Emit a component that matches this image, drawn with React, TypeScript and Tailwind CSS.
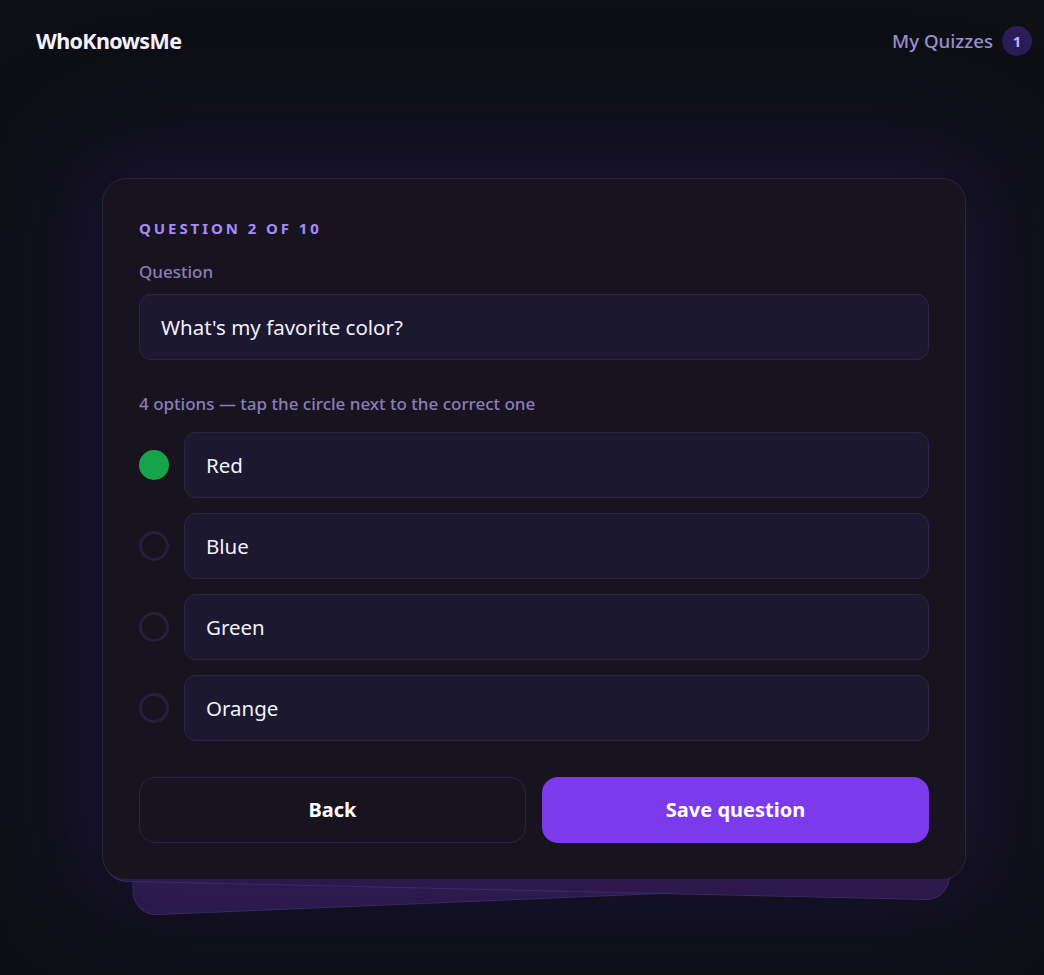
import React from "react";

const options = ["Red", "Blue", "Green", "Orange"];

export default function App() {
  return (
    <div className="min-h-[975px] w-full bg-[#0e0f15] font-['Noto_Sans',sans-serif] text-white overflow-hidden">
      <header className="flex items-center justify-between h-[82px] pl-[36px] pr-[12px]">
        <div className="text-[21.5px] font-bold tracking-[-0.03em] text-[#f5f3ff]">WhoKnowsMe</div>
        <div className="flex items-center gap-[9px]">
          <span className="text-[18.7px] font-medium text-[#9a8fcf]">My Quizzes</span>
          <span className="flex h-[30px] w-[30px] items-center justify-center rounded-full bg-[#2b1d57] text-[15px] font-bold text-[#c4b5fd]">1</span>
        </div>
      </header>

      <main className="pt-[96px] pb-[60px]">
        <div className="relative ml-[102px] w-[864px]">
          <div className="absolute inset-[-50px] rounded-[80px] bg-[#3b1f8a]/12 blur-[60px]" />
          <div className="absolute inset-0 rounded-[24px] border border-[#3a2a66] bg-[linear-gradient(180deg,#2b1d52,#2a1a4a)] translate-y-[33px] -rotate-[2.4deg] scale-[0.96]" />
          <div className="absolute inset-0 rounded-[24px] border border-[#3a2a66] bg-[linear-gradient(180deg,#2e1c50,#2b1846)] translate-y-[18px] rotate-[1.3deg] scale-[0.98]" />
          <div className="relative rounded-[24px] border border-[#2a2342] bg-[#17141f] px-[36px] pt-[35px] pb-[36px] shadow-[0_0_80px_rgba(91,50,200,0.12)]">
            <div className="text-[15px] font-bold leading-[28px] tracking-[0.195em] text-[#a78bfa]">QUESTION 2 OF 10</div>
            <div className="mt-[18px] text-[17px] font-medium leading-[24px] text-[#8a7eb8]">Question</div>
            <div className="mt-[10px] flex h-[66px] items-center rounded-[12px] border border-[#2c2644] bg-[#1c1830] px-[21px] text-[20.5px] text-[#f3f1fb]">
              What's my favorite color?
            </div>
            <div className="mt-[32px] text-[17px] font-medium leading-[24px] text-[#8a7eb8]">
              4 options — tap the circle next to the correct one
            </div>
            <div className="mt-[16px] flex flex-col gap-[15px]">
              {options.map((o, i) => (
                <div key={o} className="flex items-center gap-[15px]">
                  {i === 0 ? (
                    <span className="h-[30px] w-[30px] shrink-0 rounded-full bg-[#16a34a]" />
                  ) : (
                    <span className="h-[30px] w-[30px] shrink-0 rounded-full border-[3px] border-[#26213a]" />
                  )}
                  <div className="flex h-[66px] flex-1 items-center rounded-[12px] border border-[#2c2644] bg-[#1c1830] px-[21px] text-[20.5px] text-[#f3f1fb]">
                    {o}
                  </div>
                </div>
              ))}
            </div>
            <div className="mt-[36px] grid grid-cols-2 gap-[16px]">
              <button className="h-[66px] rounded-[16px] border border-[#2a2342] bg-transparent text-[20px] font-bold text-white">Back</button>
              <button className="h-[66px] rounded-[16px] bg-[#7c3aed] text-[20px] font-bold text-white">Save question</button>
            </div>
          </div>
        </div>
      </main>
    </div>
  );
}
